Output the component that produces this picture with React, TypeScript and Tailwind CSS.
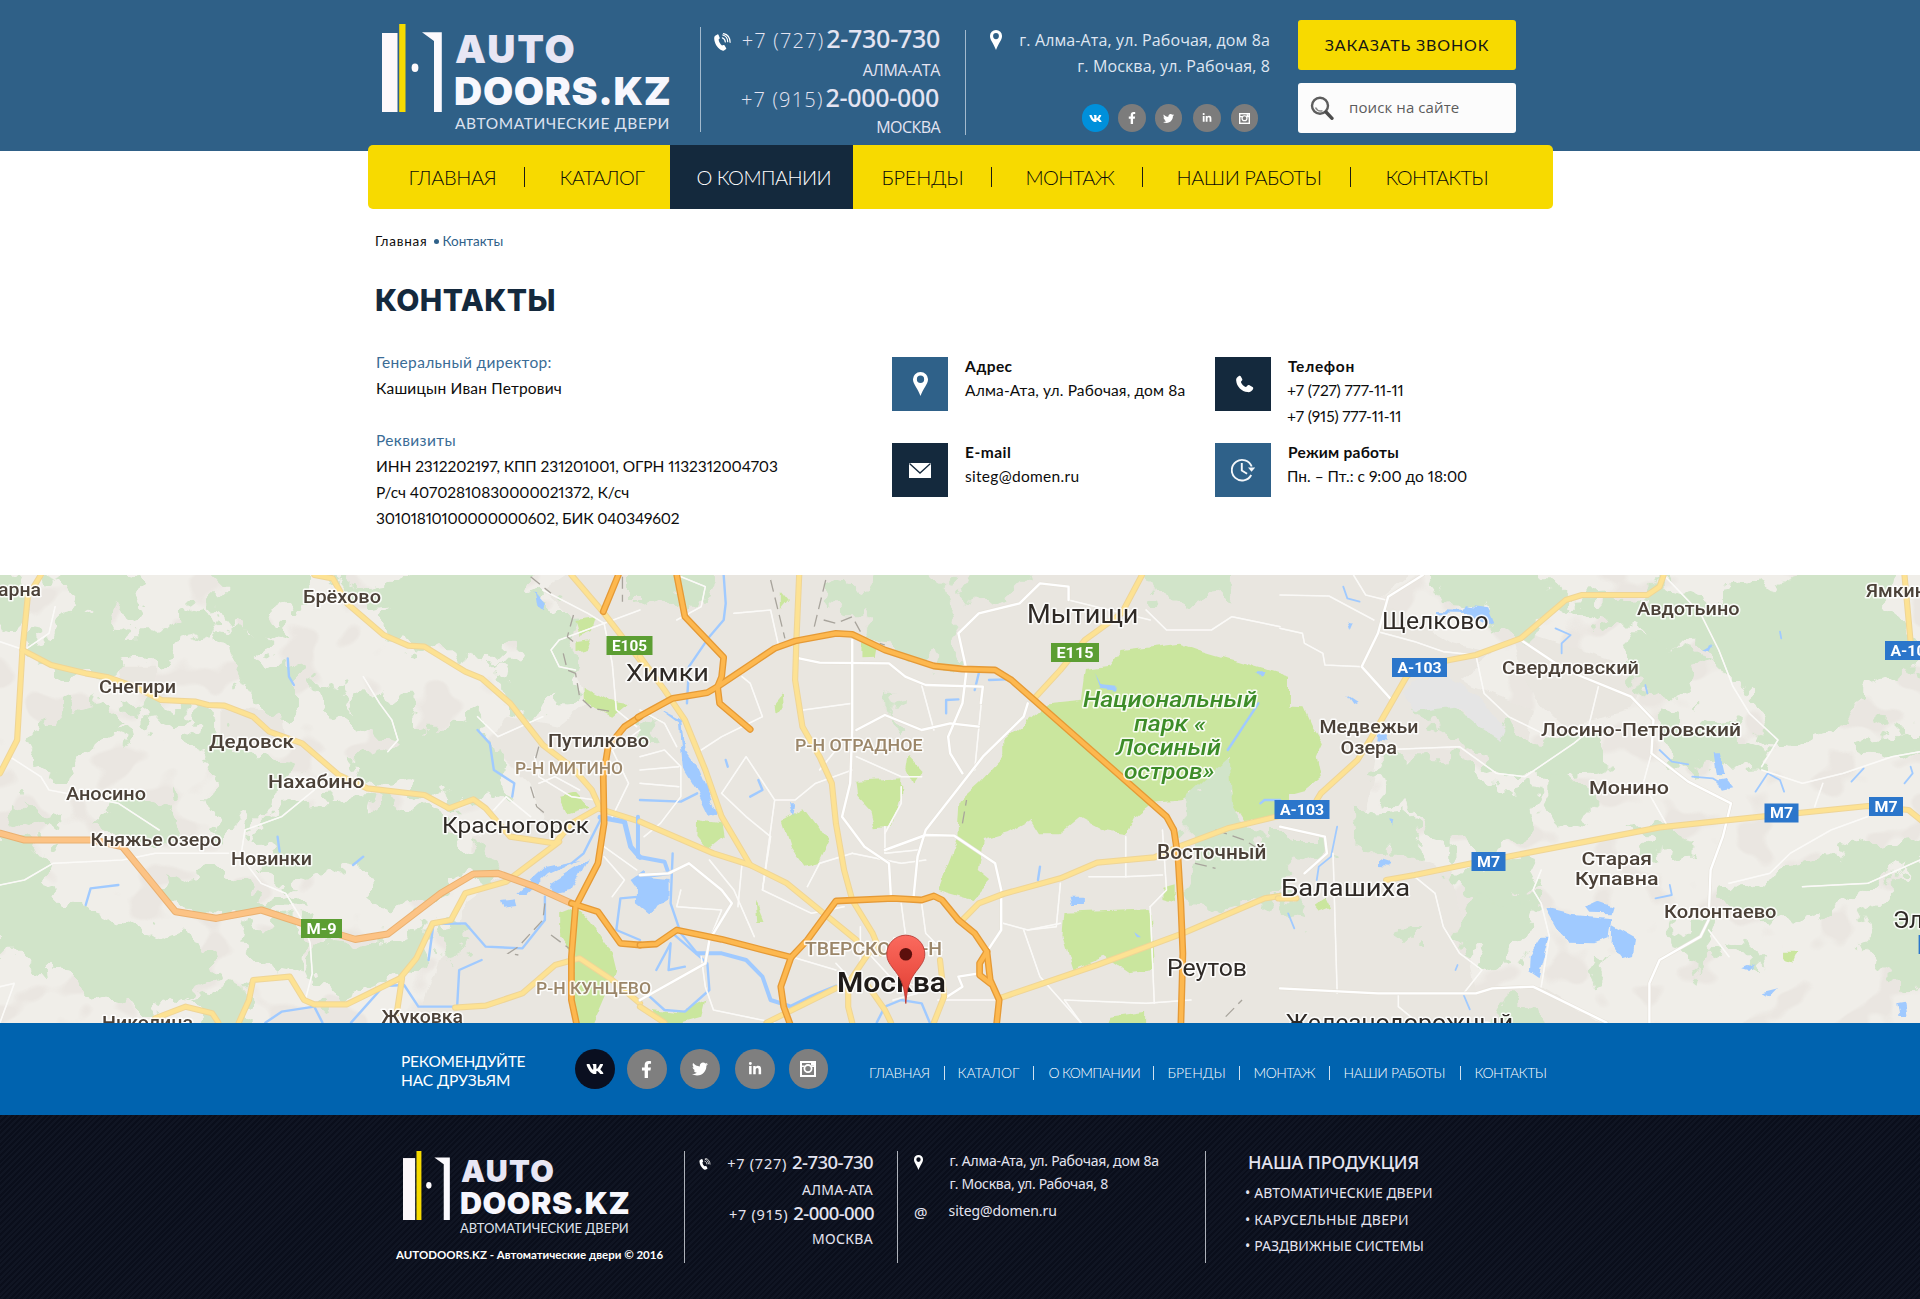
import type { ReactNode } from "react";
import { FaVk, FaFacebookF, FaTwitter, FaLinkedinIn } from "react-icons/fa";

type RoadKind = "yellow" | "orange" | "ring" | "white" | "minor";

const roadStyle: Record<RoadKind, { casing: string; fill: string; outer: number; inner: number }> = {
  yellow: { casing: "#efd596", fill: "#fde293", outer: 6.2, inner: 4.2 },
  orange: { casing: "#eab070", fill: "#fcc385", outer: 7.2, inner: 5.2 },
  ring: { casing: "#e59a36", fill: "#fdb84f", outer: 6.8, inner: 4.2 },
  white: { casing: "#e6e2da", fill: "#ffffff", outer: 3.6, inner: 2.4 },
  minor: { casing: "#f7f6f3", fill: "#fbfaf8", outer: 1.5, inner: 1.2 },
};

function Roads({ kind, lines }: { kind: RoadKind; lines: string[] }) {
  const s = roadStyle[kind];
  return (
    <g fill="none" strokeLinejoin="round" strokeLinecap="round">
      {lines.map((l) => (
        <polyline key={"c" + l} points={l} stroke={s.casing} strokeWidth={s.outer} vectorEffect="non-scaling-stroke" />
      ))}
      {lines.map((l) => (
        <polyline key={"f" + l} points={l} stroke={s.fill} strokeWidth={s.inner} vectorEffect="non-scaling-stroke" />
      ))}
    </g>
  );
}

function Areas({ fill, shapes }: { fill: string; shapes: string[] }) {
  return (
    <g fill={fill}>
      {shapes.map((s) => (
        <polygon key={s} points={s} />
      ))}
    </g>
  );
}

function Rivers({ lines, width = 2.4 }: { lines: string[]; width?: number }) {
  return (
    <g fill="none" stroke="#a0caff" strokeLinejoin="round" strokeLinecap="round">
      {lines.map((l) => (
        <polyline key={l} points={l} strokeWidth={width} vectorEffect="non-scaling-stroke" />
      ))}
    </g>
  );
}

const FOREST = "#d1e4c9";
const PARK = "#cae69e";
const URBAN = "#e9e6e0";
const WATER = "#a0caff";

const WEST = "translate(0 570) scale(0.408163 0.333333)";
const CENTER = "translate(640 570) scale(0.408163 0.333333)";
const EAST = "translate(1280 570) scale(0.408163 0.333333)";

type Label = { t: string; x: number; r: number; y: number; s: number; k?: "city" | "district" | "park" | "capital" };

const labels: Label[] = [
  { t: "арна", x: -2, r: 41, y: 596, s: 18 },
  { t: "Брёхово", x: 303, r: 381, y: 602.7, s: 18 },
  { t: "Снегири", x: 99, r: 176, y: 692.7, s: 18 },
  { t: "Дедовск", x: 209, r: 294, y: 748, s: 18 },
  { t: "Нахабино", x: 268, r: 364.5, y: 788, s: 18 },
  { t: "Аносино", x: 66, r: 146, y: 800, s: 18 },
  { t: "Княжье озеро", x: 90.6, r: 221.5, y: 846, s: 18 },
  { t: "Новинки", x: 231, r: 312, y: 865, s: 18 },
  { t: "Красногорск", x: 442, r: 589, y: 832.7, s: 22.5, k: "city" },
  { t: "Путилково", x: 548, r: 649, y: 746.7, s: 18 },
  { t: "Р-Н МИТИНО", x: 515, r: 623, y: 774, s: 16, k: "district" },
  { t: "Р-Н КУНЦЕВО", x: 536, r: 651, y: 994, s: 16, k: "district" },
  { t: "Николина", x: 102, r: 193, y: 1029, s: 18 },
  { t: "Жуковка", x: 381.5, r: 463, y: 1022.5, s: 18 },
  { t: "Химки", x: 626, r: 709, y: 681, s: 23.5, k: "city" },
  { t: "Мытищи", x: 1027, r: 1138.5, y: 622.5, s: 26, k: "city" },
  { t: "Р-Н ОТРАДНОЕ", x: 795, r: 922.5, y: 750.5, s: 17, k: "district" },
  { t: "Национальный", x: 1083, r: 1257, y: 706.5, s: 22.5, k: "park" },
  { t: "парк «", x: 1134, r: 1206, y: 730.5, s: 22.5, k: "park" },
  { t: "Лосиный", x: 1116, r: 1221, y: 755, s: 22.5, k: "park" },
  { t: "остров»", x: 1124, r: 1214.5, y: 779, s: 22.5, k: "park" },
  { t: "Восточный", x: 1157, r: 1266.5, y: 859, s: 19.5 },
  { t: "ТВЕРСКОЙ Р-Н", x: 805, r: 942, y: 955, s: 18, k: "district" },
  { t: "Москва", x: 837, r: 946, y: 992, s: 27.5, k: "capital" },
  { t: "Реутов", x: 1167, r: 1247, y: 976, s: 23, k: "city" },
  { t: "Щелково", x: 1382, r: 1488.5, y: 629, s: 23, k: "city" },
  { t: "Авдотьино", x: 1637, r: 1739.5, y: 615, s: 18 },
  { t: "Ямкино", x: 1866, r: 1937, y: 596.5, s: 18 },
  { t: "Свердловский", x: 1502, r: 1639, y: 673.7, s: 18 },
  { t: "Медвежьи", x: 1319.5, r: 1418.5, y: 733, s: 18 },
  { t: "Озера", x: 1340.5, r: 1397, y: 753.5, s: 18 },
  { t: "Лосино-Петровский", x: 1541, r: 1741, y: 736, s: 19 },
  { t: "Монино", x: 1589, r: 1669, y: 793.7, s: 18.5 },
  { t: "Старая", x: 1581.5, r: 1652, y: 864.7, s: 18.5 },
  { t: "Купавна", x: 1575, r: 1658.5, y: 885, s: 18.5 },
  { t: "Балашиха", x: 1281, r: 1410, y: 895.5, s: 24, k: "city" },
  { t: "Колонтаево", x: 1664, r: 1776.5, y: 917.7, s: 18 },
  { t: "Электросталь", x: 1893, r: 2053, y: 928, s: 23, k: "city" },
  { t: "Железнодорожный", x: 1285.5, r: 1513, y: 1031, s: 23.5, k: "city" },
];

const labelFill = { place: "#4b4138", city: "#2f2a26", district: "#9b8669", park: "#3d8c28", capital: "#1f1b19" };

type Shield = { t: string; x: number; y: number; w: number; c: string };
const shields: Shield[] = [
  { t: "E105", x: 606.5, y: 636, w: 46, c: "#5c9e33" },
  { t: "E115", x: 1051, y: 643, w: 48, c: "#5c9e33" },
  { t: "M-9", x: 301, y: 919, w: 41, c: "#5c9e33" },
  { t: "A-103", x: 1392, y: 658, w: 55, c: "#2b76cb" },
  { t: "A-103", x: 1274.5, y: 800, w: 55, c: "#2b76cb" },
  { t: "M7", x: 1471.5, y: 852, w: 34, c: "#2b76cb" },
  { t: "M7", x: 1764.5, y: 803.5, w: 34, c: "#2b76cb" },
  { t: "M7", x: 1869, y: 797, w: 34, c: "#2b76cb" },
  { t: "A-103", x: 1885, y: 641, w: 55, c: "#2b76cb" },
];

function RegionMap() {
  return (
    <svg viewBox="0 575 1920 448" className="block h-[448px] w-full" role="img" aria-label="Карта">
      <defs>
        <filter id="rough" x="0" y="0" width="100%" height="100%">
          <feTurbulence type="fractalNoise" baseFrequency="0.04" numOctaves="3" seed="4" result="n" />
          <feDisplacementMap in="SourceGraphic" in2="n" scale="48" xChannelSelector="R" yChannelSelector="G" />
        </filter>
        <filter id="rough-soft" x="0" y="0" width="100%" height="100%">
          <feTurbulence type="fractalNoise" baseFrequency="0.06" numOctaves="2" seed="9" result="n" />
          <feDisplacementMap in="SourceGraphic" in2="n" scale="9" xChannelSelector="R" yChannelSelector="G" />
        </filter>
        <filter id="patches" x="0" y="0" width="100%" height="100%" colorInterpolationFilters="sRGB">
          <feTurbulence type="fractalNoise" baseFrequency="0.022 0.026" numOctaves="2" seed="21" />
          <feColorMatrix values="0 0 0 0 0.918  0 0 0 0 0.902  0 0 0 0 0.882  14 0 0 0 -7.8" />
        </filter>
        <linearGradient id="pin" x1="0" y1="0" x2="0" y2="1">
          <stop offset="0" stopColor="#fb6a5e" />
          <stop offset="0.5" stopColor="#ee5347" />
          <stop offset="1" stopColor="#dd3a30" />
        </linearGradient>
      </defs>
      <rect x="0" y="575" width="1920" height="448" fill="#f0eee9" />
      <rect x="0" y="575" width="1920" height="448" filter="url(#patches)" />

      <g filter="url(#rough-soft)">
        <g transform={WEST}>
          <Areas
            fill={URBAN}
            shapes={[
              "540,410 690,420 700,510 620,540 540,520",
              "280,290 380,290 380,340 300,350",
              "1400,0 1580,0 1580,1370 1020,1370 1060,1230 1140,1000 1240,910 1160,860 1160,800 1330,740 1300,640 1200,520 1240,440 1370,470 1440,400 1390,250 1390,130 1330,60",
            ]}
          />
        </g>
        <g transform={CENTER}>
          <Areas fill={URBAN} shapes={["-20,0 1580,0 1580,1370 -20,1370"]} />
        </g>
        <g transform={EAST}>
          <Areas
            fill={URBAN}
            shapes={[
              "-20,0 330,0 240,90 420,220 520,250 440,330 620,420 600,560 440,530 240,560 200,800 420,900 480,1260 640,1250 800,1370 -20,1370",
              "560,170 760,250 900,300 860,420 700,470 620,380",
            ]}
          />
        </g>
      </g>

      <g filter="url(#rough)">
        <g transform={WEST}>
          <Areas
            fill={FOREST}
            shapes={[
              "110,-30 290,-30 345,60 330,120 290,140 310,190 390,190 510,100 550,190 470,220 420,230 400,285 330,300 290,295 240,330 180,320 110,275 65,230 80,180 120,190 170,150 200,120 180,80 140,60",
              "520,-30 740,-30 760,90 710,120 660,160 710,225 640,210 600,200 550,130 520,100",
              "780,-30 880,60 990,40 1030,-30 1290,-30 1320,60 1350,120 1420,130 1400,240 1410,320 1440,410 1370,420 1330,320 1290,310 1250,220 1200,280 1130,250 1060,250 1010,220 960,200 920,140 970,100 870,110",
              "550,180 620,200 670,270 730,300 730,390 710,430 640,410 590,300 560,250",
              "1220,280 1300,270 1350,330 1300,450 1240,400",
              "890,370 1000,380 1030,470 1090,470 1190,430 1220,500 1230,610 1250,660 1180,700 1100,700 1040,670 960,650 870,630 880,570 950,540 960,500 890,470 830,440",
              "480,410 540,470 560,540 710,560 730,620 670,650 660,710 610,770 540,800 490,700 520,620 480,520 490,460",
              "-20,780 50,790 120,850 110,930 130,970 190,1000 270,1040 330,1060 410,1090 510,1140 540,1230 450,1280 400,1320 300,1300 200,1260 170,1210 100,1200 60,1160 -20,1160",
              "160,410 250,390 310,450 220,520 190,600 130,620 70,570 100,500",
              "-20,20 50,20 70,110 20,170 -20,150",
              "230,760 300,680 350,710 430,680 450,770 390,810 300,810",
              "690,700 820,690 900,680 1010,720 1110,740 1100,800 1170,850 1200,910 1110,930 1060,990 960,1040 880,1000 900,910 820,890 760,930 700,950 640,900 680,850 620,780",
              "410,930 520,900 590,930 640,990 730,970 750,1035 640,1015 540,1040 430,1020",
              "600,1050 710,1060 760,1110 765,1190 710,1210 640,1190 590,1120",
              "790,1100 870,1110 960,1095 1040,1050 1040,1170 970,1220 880,1270 800,1300 760,1250 780,1160",
              "440,1290 560,1260 610,1240 620,1400 510,1400",
              "1060,1075 1150,1060 1170,1120 1110,1155 1065,1120",
              "310,400 360,370 430,420 480,440 450,490 380,470",
              "260,460 320,480 330,540 290,520",
              "20,740 60,690 140,740 100,780",
              "780,320 840,350 870,430 830,460 790,400",
            ]}
          />
        </g>
        <g transform={CENTER}>
          <Areas
            fill={FOREST}
            shapes={[
              "-20,-30 180,-30 170,80 110,120 60,90 -20,130",
              "460,50 560,10 690,-30 760,60 770,130 790,260 740,305 650,260 600,225 550,195 560,130 490,130 450,110",
              "780,-30 960,-30 940,60 890,115 800,70",
              "1220,-30 1470,-30 1470,75 1330,100 1240,80",
              "1340,660 1440,550 1460,690 1480,770 1590,830 1590,955 1400,1030 1340,1010 1345,800",
              "610,350 640,350 620,440 640,480 620,500",
              "-20,460 40,440 50,480 -20,520",
            ]}
          />
        </g>
        <g transform={EAST}>
          <Areas
            fill={FOREST}
            shapes={[
              "360,-30 600,-30 700,90 600,200 520,190 500,120 420,115 380,50",
              "700,100 900,90 930,30 1040,80 1130,70 1360,-30 1510,-30 1500,110 1590,200 1560,300 1480,340 1420,350 1390,460 1250,525 1190,505 1170,410 1100,330 1060,230 950,230 870,170 760,160",
              "840,190 900,190 1010,255 1080,275 1010,305 1020,390 910,380 850,285",
              "220,600 300,550 400,550 490,600 530,660 610,650 630,790 570,830 400,840 380,780 300,710 240,690",
              "180,740 300,725 350,780 335,860 240,860 190,800",
              "560,480 640,490 770,480 810,530 780,610 670,630 580,610 530,520",
              "640,620 700,610 780,700 770,790 700,780 640,710",
              "-10,795 100,795 115,855 60,880 -10,870",
              "460,970 560,945 620,1000 610,1110 560,1190 430,1110",
              "840,780 960,770 1010,845 900,860",
              "1080,960 1200,940 1230,890 1340,860 1400,820 1590,780 1590,870 1420,970 1300,1050 1180,1030 1090,1010",
              "1420,1110 1490,960 1590,840 1590,1200 1540,1275 1480,1200",
              "960,1075 1040,1050 1070,1150 1035,1220 980,1160",
              "1420,490 1500,460 1590,470 1570,570 1440,560",
              "325,410 460,420 545,480 565,550 610,600 570,620 475,550 350,450",
              "910,430 1000,470 1110,450 1210,540 1170,600 1030,610 950,560",
              "420,900 600,880 630,970 560,1000 440,965",
              "550,1300 620,1310 650,1400 530,1400",
              "-10,970 50,980 60,1050 10,1040",
              "300,1090 350,1080 350,1130 310,1130",
              "1100,1110 1150,1120 1200,1180 1150,1170",
              "750,1180 800,1190 780,1240",
            ]}
          />
        </g>
      </g>

      <g filter="url(#rough-soft)">
        <g transform={WEST}>
          <Areas
            fill={PARK}
            shapes={[
              "1370,1030 1410,1010 1450,1060 1500,1150 1510,1200 1450,1370 1410,1370 1400,1150 1370,1100",
              "1370,680 1410,670 1440,710 1390,730",
              "1410,150 1460,140 1450,180 1420,195",
              "1430,350 1490,390 1540,400 1500,440 1430,400",
              "1410,210 1450,205 1440,240 1410,250",
            ]}
          />
          <Areas
            fill={WATER}
            shapes={[
              "1350,940 1440,870 1400,960 1360,970",
              "1265,975 1340,890 1420,870 1340,915 1290,975",
              "1225,990 1260,985 1265,1005 1230,1010",
              "1310,60 1335,95 1330,115 1315,100",
              "1545,930 1580,900 1580,990",
            ]}
          />
        </g>
        <g transform={CENTER}>
          <Areas
            fill={PARK}
            shapes={[
              "1150,290 1180,240 1320,218 1370,240 1590,320 1590,740 1480,750 1450,690 1445,560 1400,610 1330,690 1250,700 1210,740 1190,790 1140,780 1080,740 1030,790 980,790 960,750 900,790 840,810 830,900 860,930 815,990 730,960 780,800 785,690 830,640 890,560 890,510 960,440 1000,400 1080,390 1090,300",
              "530,635 640,628 640,680 620,770 575,775 565,720 535,680",
              "350,750 400,715 440,780 465,800 435,880 405,890 370,830",
              "140,750 200,760 205,800 165,840 138,800",
              "1040,1025 1250,1015 1260,1200 1200,1210 1140,1160 1060,1200 1035,1100",
              "540,225 580,225 575,260 540,262",
              "330,400 350,370 352,410 332,425",
              "285,990 305,1050 290,1050",
              "1280,950 1310,940 1310,1000 1280,990",
              "660,560 690,600 670,640 655,600",
              "30,1320 90,1330 160,1290 150,1340 60,1370",
              "1150,1340 1240,1325 1240,1370 1140,1370",
              "345,60 365,90 345,120",
            ]}
          />
          <Areas
            fill={WATER}
            shapes={[
              "45,415 100,450 110,540 145,600 190,730 170,738 135,650 105,590 95,460",
              "-10,920 70,930 70,990 20,1030 -10,1000",
              "1050,980 1090,980 1090,1005 1055,1005",
              "1115,310 1130,345 1165,350 1165,365 1130,360",
              "1510,310 1530,310 1525,330",
              "365,700 380,700 375,740",
              "1210,1085 1230,1105 1220,1105",
            ]}
          />
        </g>
        <g transform={EAST}>
          <Areas fill={PARK} shapes={["-30,410 60,415 80,470 105,520 90,560 100,620 60,660 -30,690", "85,1010 115,985 125,1010 95,1025", "1235,1145 1270,1145 1260,1175 1235,1165"]} />
          <Areas fill="#e5e5e5" shapes={["300,370 340,320 400,310 490,380 550,480 540,510 490,470 430,410 330,425"]} />
          <Areas
            fill={WATER}
            shapes={[
              "650,1015 720,1035 812,1045 805,1105 770,1120 710,1118 680,1080",
              "812,1065 870,1105 865,1155 838,1165 810,1120",
              "750,1012 780,995 815,1010 810,1030 760,1028",
              "640,1100 662,1100 636,1222 610,1200 612,1155",
              "1060,550 1080,550 1092,612 1068,612",
              "1068,635 1092,630 1108,655 1080,662",
              "378,120 450,122 458,106 510,115 525,160 510,165 460,132 380,130",
              "1510,1300 1530,1295 1535,1338 1515,1338",
              "1180,1270 1220,1258 1200,1283",
              "165,155 180,158 172,180",
              "1035,245 1060,228 1050,250",
              "245,870 270,880 265,890 245,888",
              "165,375 190,395 180,402",
              "238,490 260,490 258,512 236,508",
              "265,748 275,750 272,768",
              "1135,1195 1165,1180 1150,1200",
            ]}
          />
        </g>
      </g>

      <g transform={WEST}>
        <Rivers
          lines={[
            "650,1358 690,1325 770,1310 790,1358",
            "860,1358 940,1248 990,1245 1025,1310 1120,1310 1125,1200 1180,1170",
            "1050,1170 1062,1062 1140,1060 1190,1130 1280,1135 1335,1050 1335,980",
            "210,1005 222,955 290,945",
            "1475,740 1430,850 1400,880",
            "1170,480 1200,520 1210,600 1260,640 1255,680",
            "1568,980 1520,985 1510,1080 1568,1110",
            "705,265 708,320 720,345",
            "680,800 685,845",
            "865,885 890,860",
          ]}
        />
        <Rivers width={5} lines={["1470,742 1530,755 1545,830 1568,862"]} />
        <Roads
          kind="minor"
          lines={[
            "0,215 60,240",
            "0,945 60,930 130,880 300,870 380,850 560,850",
            "30,565 100,620 120,660 290,700 390,780",
            "60,240 120,190 135,110",
            "770,660 690,740 600,780 590,860 640,940 700,970 740,1050 760,1120 765,1210 750,1280",
            "0,1250 35,1240 0,1358",
            "890,320 930,400 960,450 975,510 950,545",
            "1568,120 1480,160 1370,210 1350,240 1370,290 1410,300",
            "1480,160 1500,280 1510,420 1560,470",
            "1330,60 1440,130 1480,160",
            "1170,440 1220,500 1330,440",
            "1310,560 1320,620 1400,680 1460,690",
            "1480,830 1560,900",
            "1210,720 1240,680 1300,740",
            "1568,480 1500,540 1540,640 1500,740",
            "1480,860 1530,930 1500,980",
            "1320,640 1360,620 1420,660",
          ]}
        />
        <g fill="none" stroke="#a8a49c" strokeDasharray="12 6" strokeWidth="1.3">
          {["1300,20 1350,70", "1405,135 1390,200 1410,220", "1380,250 1390,300 1410,310 1420,380 1450,415 1500,425", "1320,530 1305,600", "1300,650 1315,710 1335,730", "1335,1000 1330,1050 1270,1130 1245,1150 1270,1155", "1350,1095 1400,1140", "1525,20 1525,95"].map((l) => (
            <polyline key={l} points={l} vectorEffect="non-scaling-stroke" />
          ))}
        </g>
        <Roads
          kind="yellow"
          lines={[
            "100,15 68,80 55,240 42,510 0,610",
            "55,240 125,285 210,310 265,322 330,350 395,390 480,395 510,405 550,407 620,440 660,485 740,520 830,615 900,655 1040,675 1100,715 1160,688 1190,715 1250,800 1360,820 1400,760 1465,715 1568,755",
            "770,15 815,25 850,100 940,195 1000,227 1040,230 1140,305 1180,325 1250,400 1330,525 1400,590 1450,660 1470,715",
            "1370,815 1240,935 1140,970 1105,1050 1060,1060 1020,1165 980,1225 850,1303 770,1303 745,1290 710,1220 620,1230 610,1290 585,1358",
            "985,1225 972,1330",
            "1115,1313 1190,1307 1280,1270 1360,1185 1420,1165 1500,1230 1568,1300",
            "380,1345 455,1310 520,1330 535,1358",
            "1400,15 1480,130 1568,270",
          ]}
        />
        <Roads
          kind="orange"
          lines={["0,790 60,810 230,810 300,830 430,1025 530,1045 640,1020 740,1060 870,1108 950,1092 1080,970 1160,912 1220,910 1310,950 1400,1000"]}
        />
        <Roads
          kind="ring"
          lines={[
            "1400,1000 1465,1025 1520,1120 1568,1125",
            "1568,440 1530,470 1490,530 1478,620 1480,760 1465,880 1410,1010 1400,1160 1400,1290 1412,1358",
            "1515,15 1478,125",
          ]}
        />
      </g>

      <g transform={CENTER}>
        <Rivers
          lines={[
            "205,15 210,100 205,150 170,200 120,290 115,400",
            "80,850 75,1000 100,1090 140,1150",
            "80,1090 165,1180 170,1260 110,1325 60,1320 15,1270",
            "1568,690 1530,690 1520,700",
            "750,430 750,390 780,388",
            "830,310 820,360",
            "855,330 900,328",
            "980,890 975,930",
            "1515,400 1440,540",
            "580,1358 600,1310 640,1290 690,1300 710,1358",
            "0,690 100,695 140,670",
            "40,1200 75,1120 70,1200 110,1190",
            "290,630 300,660 270,680",
            "210,570 215,590",
          ]}
        />
        <Rivers width={4} lines={["-5,740 -5,860 60,875 70,910 0,920", "140,1150 200,1150 260,1170 300,1220 320,1290 370,1310 420,1280 480,1250"]} />
        <Roads
          kind="minor"
          lines={[
            "0,560 60,540 100,590 100,680 50,760 10,800",
            "0,640 95,650",
            "0,600 95,590",
            "0,420 60,460 90,530",
            "230,130 320,120 340,230",
            "250,320 270,340 300,440 200,500 150,540",
            "200,670 260,560 330,690 380,690 430,640 520,600",
            "200,670 260,740 320,800 300,960",
            "330,690 300,960 420,1030 500,1010",
            "100,960 90,1010 200,1020 170,1110",
            "170,870 230,960 280,1100",
            "400,420 520,400",
            "150,1160 160,1250 180,1320 330,1358",
            "370,1160 480,1200",
            "600,770 600,850 680,840",
            "690,620 640,620 530,560",
            "840,350 820,600",
            "520,850 440,880 410,950",
            "1190,800 1190,920 1100,920",
            "1190,920 1280,915",
            "1280,780 1290,960 1250,1010",
            "1030,940 1020,1070 950,1080",
            "1040,1290 1240,1300 1350,1290",
            "940,1080 980,1220 1080,1358",
            "890,1060 950,1080 1030,1060",
            "730,1290 870,1290",
            "1250,1010 1260,1300",
            "1080,1358 1040,1290",
            "1240,120 1290,180 1400,180 1450,140 1568,170",
            "1050,90 1250,150",
            "90,15 160,50 150,110 90,150",
            "640,650 640,700 600,790",
            "480,540 440,600",
            "690,345 720,480",
            "700,870 640,880 520,850",
            "250,880 240,1010",
            "540,1070 540,1180",
            "560,1150 620,1230 720,1260",
            "690,1000 700,1090 740,1140",
            "640,1000 650,1090",
            "480,1180 540,1260",
            "620,1290 680,1270",
          ]}
        />
        <Roads
          kind="white"
          lines={[
            "520,210 520,480 515,640 495,740 550,830 610,880 615,985",
            "390,265 440,278 610,280 650,320 700,345 840,350 835,400",
            "950,400 940,440 840,560 700,780 680,860 670,985",
            "790,610 760,550 755,500 790,400 800,300 780,190 830,130 930,100 980,40 1050,50 1050,90",
            "600,840 700,795 770,797 870,880 885,960 885,1080 850,1145",
            "0,915 70,910 120,880 200,960 225,1000 170,1110 160,1180 0,1290",
            "530,480 600,435 690,480 760,460 830,470",
            "740,1290 790,1250 780,1220 830,1210",
          ]}
        />
        <g fill="none" stroke="#a8a49c" strokeDasharray="12 6" strokeWidth="1.3">
          {["320,30 355,205", "455,30 425,180", "450,150 480,160 520,140 540,185", "545,205 600,225", "790,760 800,690", "1410,780 1480,810 1520,840", "1360,880 1410,895", "1435,1340 1475,1290"].map((l) => (
            <polyline key={l} points={l} vectorEffect="non-scaling-stroke" />
          ))}
        </g>
        <Roads
          kind="yellow"
          lines={[
            "390,15 383,215 380,330 398,470 440,560 470,640 480,760 500,900 520,990 570,1090 590,1150",
            "0,755 180,850 270,885 360,940 450,1030 530,1110",
            "0,260 60,360 110,450 160,600 200,740 270,885",
            "1230,15 1180,130 1090,210 1030,300 970,380",
            "790,1050 830,1000 890,972 1030,925 1120,878 1260,862 1320,830 1440,775 1575,735",
            "880,1285 1120,1185 1330,1090 1530,985 1568,978",
            "560,1150 510,1240 510,1310 520,1358",
            "560,1250 600,1320 615,1358",
            "735,1170 745,1280 720,1358",
            "310,1358 480,1255",
            "0,1310 60,1358",
          ]}
        />
        <Roads
          kind="ring"
          lines={[
            "90,15 110,140 205,262 200,320 190,350 195,400 270,478",
            "-5,442 80,385 165,368 190,350 330,235 380,213 480,190 520,193 600,240 720,288 790,297 870,300 910,330 1290,740 1308,780 1318,860 1325,1000 1330,1150 1325,1370",
            "0,1125 40,1122 90,1080 200,1108 370,1162 410,1110 480,993 620,985 690,990 720,978 740,990 780,1050 820,1090 850,1145 858,1230 880,1290 873,1370",
            "370,1162 345,1250 352,1310 370,1370",
            "850,1145 832,1180 832,1215 858,1240",
          ]}
        />
      </g>

      <g transform={EAST}>
        <Rivers
          width={1.8}
          lines={[
            "675,175 712,195 690,220 690,250",
            "155,50 165,85 195,95",
            "1010,620 1060,625 1100,655",
            "1165,665 1195,610 1225,630 1235,665",
            "1400,635 1430,595",
            "1530,640 1550,610 1545,590",
            "140,770 125,860 95,890 90,930",
            "930,540 960,575 1000,583",
            "920,985 960,975 955,945",
            "450,1275 465,1318",
            "20,1030 35,1075",
            "895,345 900,370",
            "430,1200 435,1185",
            "1225,185 1228,205",
          ]}
        />
        <Roads
          kind="minor"
          lines={[
            "0,75 120,78 230,150",
            "0,175 55,190 60,220 105,250 110,285 200,290",
            "180,15 210,75 260,90",
            "240,185 330,215 400,245 480,255",
            "480,255 500,370 560,440 660,500",
            "240,540 440,530 530,610 600,620 720,520 770,470",
            "780,350 750,500",
            "940,15 1030,130 1075,240 1110,350 1150,430 1220,510 1180,590",
            "1180,600 1280,640 1380,610 1500,560 1568,545",
            "1440,740 1350,780 1250,850 1200,910 1100,940",
            "640,900 620,960 640,1000 660,1100 640,1250",
            "330,920 380,970 400,1070 440,1150 495,1200 450,1270",
            "130,850 140,1270",
            "1280,950 1440,940 1568,870",
            "1050,1080 1100,1160",
            "910,550 890,640 950,770",
            "1330,640 1310,710",
            "290,1275 290,1310 330,1350",
          ]}
        />
        <Roads
          kind="white"
          lines={[
            "350,15 265,80 240,190 200,290 270,385",
            "590,210 700,300 860,380 915,450 910,550 1000,635 1105,700 1085,800 1055,900 1050,1050 1030,1100 930,1170 905,1240 905,1358",
            "0,1255 240,1270 480,1270 520,1255 620,1250 800,1358",
            "0,770 110,800 115,850 60,910",
          ]}
        />
        <Roads
          kind="yellow"
          lines={[
            "90,690 100,670 190,570 230,490 310,320 340,290 415,270 480,255 590,205 700,90 740,75 900,75 930,50 940,15",
            "260,930 330,915 470,880 550,862 930,772 1180,740 1440,708 1540,720 1575,755",
            "1530,15 1545,215",
            "-5,985 40,985",
          ]}
        />
      </g>

      <g fontFamily="Roboto, sans-serif">
        {labels.map((l) => {
          const kind = l.k ?? "place";
          return (
            <text
              key={l.t + l.x}
              x={l.x}
              y={l.y}
              fontSize={l.s}
              textLength={l.r - l.x}
              lengthAdjust="spacingAndGlyphs"
              fill={labelFill[kind]}
              stroke="#ffffff"
              strokeOpacity="0.85"
              strokeWidth="3"
              strokeLinejoin="round"
              paintOrder="stroke"
              fontStyle={kind === "park" ? "italic" : "normal"}
              fontWeight={kind === "capital" ? 600 : kind === "city" ? 450 : 500}
            >
              {l.t}
            </text>
          );
        })}
        {shields.map((s) => (
          <g key={s.t + s.x}>
            <rect x={s.x} y={s.y} width={s.w} height="19" fill={s.c} />
            <text x={s.x + s.w / 2} y={s.y + 14.6} fontSize="14.5" fontWeight="700" fill="#fff" textAnchor="middle" textLength={s.w - 11} lengthAdjust="spacingAndGlyphs">
              {s.t}
            </text>
          </g>
        ))}
        <rect x="1918.6" y="935" width="2" height="19" fill="#2b76cb" />
      </g>

      <path d="M905.8 1003.5C904.6 988 902 980 895.500 971.500C890 964.500 886.800 960.500 886.800 954A19 18.800 0 0 1 924.800 954C924.800 960.500 921.600 964.500 916.100 971.500C909.600 980 907 988 905.800 1003.500Z" fill="url(#pin)" stroke="#b93a33" strokeWidth="0.9" />
      <circle cx="905.8" cy="954.3" r="6.3" fill="#5c0f0c" />
    </svg>
  );
}

function PinIcon({ className }: { className: string }) {
  return (
    <svg viewBox="0 0 12 20" preserveAspectRatio="none" className={className} fill="currentColor">
      <path fillRule="evenodd" d="M6 0a6 6 0 0 1 6 6.200C12 10 8 14 6 20 4 14 0 10 0 6.200A6 6 0 0 1 6 0Zm0 3a2.900 3.100 0 1 0 0 6.200 2.900 3.100 0 0 0 0-6.200Z" />
    </svg>
  );
}

function RingingPhoneIcon({ className }: { className: string }) {
  return (
    <svg viewBox="0 0 17 18" className={className} fill="none">
      <path fill="currentColor" d="M1.600 2.600 3.400 1.500c.5-.3 1-.1 1.200.4l1.100 2.800c.2.5 0 .9-.3 1.100L4.600 6.600c.3 2.300 1.500 4.400 3.400 5.900l1.500-.5c.4-.1.8 0 1.100.4l1.500 2.500c.3.500.1 1-.3 1.300l-1.800 1.200c-1 .5-2.200.2-3.500-.6C3.300 14.700.5 10.300.2 5.800.1 4.300.5 3.200 1.600 2.600Z" />
      <path stroke="currentColor" strokeWidth="1.200" strokeLinecap="round" d="M8.300 4.800c1.700.5 2.900 1.900 3 4.100M8.700 2c3 .7 4.900 3.300 5 6.700M9.500.6c3.800.8 6.500 4.100 6.600 8.700" />
    </svg>
  );
}

function HandsetIcon() {
  return (
    <svg viewBox="0 0 18 18" className="h-[19px] w-[18px] translate-x-[2px]" fill="#fff">
      <path d="M1.600 1.600 2.900.5C3.500 0 4.300 0 4.700.7l1.500 2.700c.3.6.2 1.200-.2 1.600l-.9 1c-.2.3-.2.600 0 1 .9 2 2.500 3.600 4.600 4.400.3.100.7 0 .9-.3l.9-1.200c.4-.5 1-.7 1.600-.3l3.400 2c.7.4.9 1.100.6 1.800-1 2.200-3.100 3.500-5.600 3.200C5.600 16 .8 11.200.2 5.200 0 3.700.5 2.500 1.600 1.600Z" />
    </svg>
  );
}

function EnvelopeIcon() {
  return (
    <svg viewBox="0 0 22 15" className="h-[15px] w-[22px]">
      <rect width="22" height="15" fill="#fff" />
      <path d="M0.500 0.500 11 10 21.500 0.500" fill="none" stroke="#15293d" strokeWidth="1.300" />
    </svg>
  );
}

function ClockIcon() {
  return (
    <svg viewBox="0 0 24 24" className="h-6 w-6" fill="none" stroke="#f4f7fa" strokeWidth="1.900">
      <path d="M20.700 8.500A10.300 10.300 0 1 0 20.200 17" />
      <path d="M10.800 5v7.500l5.300 3.200" />
      <path d="M17 9.500h7.200l-3.700 4.300Z" fill="#f4f7fa" stroke="none" />
    </svg>
  );
}

function CameraIcon({ className }: { className: string }) {
  return (
    <svg viewBox="0 0 16 16" className={className} fill="none" stroke="#fff">
      <rect x="1" y="1" width="14" height="14" strokeWidth="2" />
      <path d="M1 5.200h3.600M11.400 5.200H15" strokeWidth="1.600" />
      <rect x="11" y="1.800" width="3" height="2.800" fill="#fff" stroke="none" />
      <circle cx="8" cy="7.600" r="3.600" strokeWidth="1.800" />
    </svg>
  );
}

function MagnifierIcon() {
  return (
    <svg viewBox="0 0 24 24" className="h-6 w-6" fill="none">
      <circle cx="10" cy="9.800" r="8" stroke="#5d5d5d" strokeWidth="2.400" />
      <path d="M5.500 11.500c1.500 3 4 4 7 3.200" stroke="#8a8a8a" strokeWidth="1.600" />
      <path d="m16 16 6 6.300" stroke="#4c4c4c" strokeWidth="3.400" strokeLinecap="round" />
    </svg>
  );
}

function LogoMark({ className }: { className: string }) {
  return (
    <svg viewBox="0 0 60 88" preserveAspectRatio="none" className={className}>
      <rect x="0" y="9" width="15.500" height="79" fill="#fdf8fa" />
      <rect x="17.200" y="0" width="6.300" height="88" fill="#f7db00" />
      <ellipse cx="33" cy="43.800" rx="3.400" ry="4.200" fill="#fdfafc" />
      <path d="M40 8.300H59.800V88H52V17Z" fill="#fbf9fd" />
    </svg>
  );
}

function T({ className = "", children }: { className?: string; children: ReactNode }) {
  return <span className={"inline-block whitespace-nowrap " + className}>{children}</span>;
}

function Social({ big }: { big?: boolean }) {
  const cell = big ? "flex h-10 w-[39.5px] items-center justify-center rounded-full text-white" : "flex h-7 w-[27.5px] items-center justify-center rounded-full text-white";
  return (
    <>
      <a className={cell + (big ? " bg-[#0a0f20]" : " bg-[#0090db]")}><FaVk className={big ? "h-[18px] w-[18px]" : "h-[13px] w-[13px]"} /></a>
      <a className={cell + (big ? " ml-[12.5px] bg-[#7f7f7f]" : " ml-[9px] bg-[#7c7c7c]")}><FaFacebookF className={big ? "h-[17px] w-[17px]" : "h-[12px] w-[12px]"} /></a>
      <a className={cell + (big ? " ml-[13.5px] bg-[#7f7f7f]" : " ml-[9px] bg-[#7c7c7c]")}><FaTwitter className={big ? "h-[16px] w-[16px]" : "h-[11px] w-[11px]"} /></a>
      <a className={cell + (big ? " ml-[15.5px] bg-[#7f7f7f]" : " ml-[11px] bg-[#7c7c7c]")}><FaLinkedinIn className={big ? "h-[14px] w-[14px]" : "h-[10px] w-[10px]"} /></a>
      <a className={cell + (big ? " ml-[14px] bg-[#7f7f7f]" : " ml-[10px] bg-[#7c7c7c]")}><CameraIcon className={big ? "h-[16px] w-[16px]" : "h-[11px] w-[11px]"} /></a>
    </>
  );
}

function Header() {
  return (
    <header className="h-[151px] bg-[#2f6087]">
      <div className="mx-auto flex w-[1184px]">
        <div className="flex w-[332px] pl-[14px]">
          <LogoMark className="mt-6 h-[88px] w-[60px]" />
          <div className="ml-3 flex flex-col items-start">
            <T className="mt-[28px] ml-px font-['Inter'] text-[39px] leading-[42px] font-black tracking-[1.9px] text-[#e8e6f4]">AUTO</T>
            <T className="font-['Inter'] text-[39px] leading-[42px] font-black tracking-[0.7px] text-[#f7f7fd]">DOORS.KZ</T>
            <T className="-mt-px ml-px font-['Lato'] text-[15.5px] leading-6 tracking-[0.6px] text-[#dce2f0]">АВТОМАТИЧЕСКИЕ ДВЕРИ</T>
          </div>
        </div>
        <div className="mt-[27px] flex h-[105px] w-[265px] border-l border-[#a3bacd] text-[#e4e4f2]">
          <RingingPhoneIcon className="mt-[6px] ml-[13px] h-[18px] w-[17px] text-white" />
          <div className="-mt-1 ml-auto flex flex-col items-end pr-[25px] font-['Noto_Sans']">
            <p className="flex items-baseline leading-[30px]">
              <T className="mr-[2px] font-['Open_Sans'] text-[20px] font-light tracking-[1.17px]">+7 (727)</T>
              <T className="text-[25px] font-medium tracking-[-0.27px]">2-730-730</T>
            </p>
            <T className="font-['Open_Sans'] text-[16px] leading-7 tracking-[-0.35px]">АЛМА-АТА</T>
            <p className="-mt-[2px] mr-px flex items-baseline leading-[30px]">
              <T className="mr-[2px] font-['Open_Sans'] text-[20px] font-light tracking-[1.18px]">+7 (915)</T>
              <T className="text-[25px] font-medium tracking-[-0.3px]">2-000-000</T>
            </p>
            <T className="font-['Open_Sans'] text-[16px] leading-6 tracking-[-0.55px]">МОСКВА</T>
          </div>
        </div>
        <div className="mt-[30px] flex h-[105px] w-[305px] border-l border-[#a3bacd] text-[#dfe6f2]">
          <PinIcon className="ml-[24px] h-[20px] w-3 text-white" />
          <div className="ml-auto flex flex-col items-end font-['Open_Sans'] text-[16px] leading-[26px] tracking-[0.12px]">
            <T className="-mt-[3px]">г. Алма-Ата, ул. Рабочая, дом 8а</T>
            <T>г. Москва, ул. Рабочая, 8</T>
            <div className="mt-[25px] mr-[12px] flex"><Social /></div>
          </div>
        </div>
        <div className="mt-5 ml-[28px] flex w-[218px] flex-col gap-[13px]">
          <button className="flex h-[50px] items-center justify-center rounded-[3px] bg-[#f7da00] font-['Lato'] text-[16px] text-[#151515]">
            <T className="tracking-[0.85px]">ЗАКАЗАТЬ ЗВОНОК</T>
          </button>
          <div className="flex h-[50px] items-center rounded-[3px] bg-[#fcfcfc] pl-[12px]">
            <MagnifierIcon />
            <T className="mb-px ml-[15px] font-['Open_Sans'] text-[15px] tracking-[0.1px] text-[#5c5c5c]">поиск на сайте</T>
          </div>
        </div>
      </div>
    </header>
  );
}

function MainNav() {
  const it = "flex h-16 items-center";
  const bar = "h-5 w-px bg-[#1c1c14]";
  return (
    <nav className="relative mx-auto -mt-[6px] flex h-16 w-[1185px] items-center overflow-hidden rounded-[5px] bg-[#f7da00] font-['Lato'] text-[20px] font-light text-[#0a0a0a]">
      <a className={it + " w-[156px] pl-[41px]"}><T className="tracking-[-0.34px]">ГЛАВНАЯ</T></a>
      <i className={bar} />
      <a className={it + " w-[145px] pl-[35px]"}><T className="tracking-[-0.5px]">КАТАЛОГ</T></a>
      <a className={it + " w-[183px] bg-[#14293d] pl-[27px] text-white"}><T className="tracking-[-0.56px]">О КОМПАНИИ</T></a>
      <a className={it + " w-[138px] pl-[29px]"}><T className="tracking-[-0.19px]">БРЕНДЫ</T></a>
      <i className={bar} />
      <a className={it + " w-[150px] pl-[34px]"}><T className="tracking-[-0.62px]">МОНТАЖ</T></a>
      <i className={bar} />
      <a className={it + " w-[207px] pl-[34px]"}><T className="tracking-[-0.45px]">НАШИ РАБОТЫ</T></a>
      <i className={bar} />
      <a className={it + " pl-[35px]"}><T className="tracking-[-0.68px]">КОНТАКТЫ</T></a>
    </nav>
  );
}

function ContactCard({ dark, icon, title, children }: { dark?: boolean; icon: ReactNode; title: ReactNode; children: ReactNode }) {
  return (
    <div className="flex">
      <div className={"flex h-[54px] w-14 items-center justify-center " + (dark ? "bg-[#14293d]" : "bg-[#2f6189]")}>{icon}</div>
      <div className="ml-[17px] flex flex-col items-start leading-[26px]">
        <h3 className="-mt-px h-[20.5px] font-bold leading-5">{title}</h3>
        {children}
      </div>
    </div>
  );
}

function Content() {
  return (
    <main className="mx-auto h-[366px] w-[1184px] pl-2 font-['Lato'] text-[15.5px] text-[#0c0c0c] proportional-nums">
      <p className="-ml-px flex items-center pt-[22px] text-[13.5px] leading-5">
        <T className="tracking-[0.8px]">Главная</T>
        <i className="mr-1 ml-[6px] h-[5px] w-[5px] rounded-full bg-[#2f6189]" />
        <T className="text-[#2f6189]">Контакты</T>
      </p>
      <h1 className="mt-[29px] -ml-px leading-10">
        <T className="font-['Inter'] text-[30px] font-extrabold tracking-[0.4px] text-[#14293d]">КОНТАКТЫ</T>
      </h1>
      <div className="mt-[24px] flex">
        <div className="flex w-[516px] flex-col items-start leading-[26px]">
          <T className="tracking-[0.34px] text-[#3a6c96]">Генеральный директор:</T>
          <T className="tracking-[0.2px]">Кашицын Иван Петрович</T>
          <T className="mt-[26px] tracking-[0.38px] text-[#3a6c96]">Реквизиты</T>
          <T className="tracking-[-0.08px]">ИНН 2312202197, КПП 231201001, ОГРН 1132312004703</T>
          <T className="tracking-[-0.08px]">Р/сч 40702810830000021372, К/сч</T>
          <T className="tracking-[-0.18px]">30101810100000000602, БИК 040349602</T>
        </div>
        <div className="mt-2 grid grid-cols-[323px_auto] grid-rows-[86px_54px]">
          <ContactCard icon={<PinIcon className="h-6 w-[15px] text-white" />} title={<T className="tracking-[0.45px]">Адрес</T>}>
            <T className="tracking-[0.15px]">Алма-Ата, ул. Рабочая, дом 8а</T>
          </ContactCard>
          <ContactCard dark icon={<HandsetIcon />} title={<T className="tracking-[0.65px]">Телефон</T>}>
            <T className="-ml-px tracking-[-0.13px]">+7 (727) 777-11-11</T>
            <T className="-ml-px tracking-[-0.13px]">+7 (915) 777-11-11</T>
          </ContactCard>
          <ContactCard dark icon={<EnvelopeIcon />} title={<T className="tracking-[0.5px]">E-mail</T>}>
            <T className="tracking-[0.3px]">siteg@domen.ru</T>
          </ContactCard>
          <ContactCard icon={<ClockIcon />} title={<T className="tracking-[0.25px]">Режим работы</T>}>
            <T className="-ml-px">Пн. – Пт.: с 9:00 до 18:00</T>
          </ContactCard>
        </div>
      </div>
    </main>
  );
}

function FriendsBar() {
  const bar = "h-[14px] w-px bg-[#cfe0f0]";
  return (
    <section className="h-[92px] bg-[#0063af] text-white">
      <div className="mx-auto flex w-[1184px] font-['Lato']">
        <div className="mt-[29px] ml-[33px] flex w-[174px] flex-col items-start text-[15.5px] leading-[19px]">
          <T className="tracking-[-0.25px]">РЕКОМЕНДУЙТЕ</T>
          <T className="tracking-[-0.1px]">НАС ДРУЗЬЯМ</T>
        </div>
        <div className="mt-[26px] flex w-[294px]"><Social big /></div>
        <nav className="mt-[40px] flex h-5 items-center text-[14px] font-light leading-5">
          <a className="w-[74.500px]"><T className="tracking-[-0.35px]">ГЛАВНАЯ</T></a><i className={bar} />
          <a className="w-[88px] pl-[13px]"><T>КАТАЛОГ</T></a><i className={bar} />
          <a className="w-[119px] pl-[15px]"><T className="tracking-[-0.65px]">О КОМПАНИИ</T></a><i className={bar} />
          <a className="w-[85px] pl-[14px]"><T>БРЕНДЫ</T></a><i className={bar} />
          <a className="w-[89px] pl-[14px]"><T className="tracking-[-0.55px]">МОНТАЖ</T></a><i className={bar} />
          <a className="w-[130px] pl-[14px]"><T className="tracking-[-0.3px]">НАШИ РАБОТЫ</T></a><i className={bar} />
          <a className="pl-[14px]"><T className="tracking-[-0.45px]">КОНТАКТЫ</T></a>
        </nav>
      </div>
    </section>
  );
}

function Footer() {
  const line = "mt-9 h-28 border-l border-[#aeb2ba]";
  return (
    <footer className="h-[184px] bg-[#0a0e1b] bg-[repeating-linear-gradient(135deg,transparent_0_2px,#101523_2px_4px)] text-[#e4e4f0]">
      <div className="mx-auto flex w-[1184px]">
        <div className="w-[316px] pl-7">
          <div className="flex h-[118px] pl-[7px]">
            <LogoMark className="mt-9 h-[69px] w-[47px]" />
            <div className="ml-[10px] flex flex-col items-start">
              <T className="mt-[40px] ml-px font-['Inter'] text-[30.5px] leading-8 font-black tracking-[1.19px] text-[#e8e6f4]">AUTO</T>
              <T className="font-['Inter'] text-[30.5px] leading-8 font-black tracking-[0.55px] text-[#f7f7fd]">DOORS.KZ</T>
              <T className="-mt-px font-['Lato'] text-[13px] leading-5 tracking-[-0.07px] text-[#dfe2ec]">АВТОМАТИЧЕСКИЕ ДВЕРИ</T>
            </div>
          </div>
          <T className="mt-3 font-['Lato'] text-[11.5px] leading-5 font-bold text-white">AUTODOORS.KZ - Автоматические двери © 2016</T>
        </div>
        <div className={line + " flex w-[213px] font-['Noto_Sans']"}>
          <RingingPhoneIcon className="mt-[6.500px] ml-[14px] h-[12px] w-[12px] text-white" />
          <div className="-mt-px ml-auto flex flex-col items-end pr-6">
            <p className="flex items-baseline leading-6">
              <T className="mr-[5px] text-[14.5px] tracking-[0.72px]">+7 (727)</T>
              <T className="text-[18.5px] font-medium tracking-[-0.55px]">2-730-730</T>
            </p>
            <T className="mt-[3px] text-[14px] leading-6 tracking-[0.3px]">АЛМА-АТА</T>
            <p className="-mt-px -mr-px flex items-baseline leading-6">
              <T className="mr-[5px] text-[14.5px] tracking-[0.67px]">+7 (915)</T>
              <T className="text-[18.5px] font-medium tracking-[-0.59px]">2-000-000</T>
            </p>
            <T className="mt-px text-[14px] leading-6 tracking-[0.3px]">МОСКВА</T>
          </div>
        </div>
        <div className={line + " flex w-[308px] font-['Noto_Sans'] text-[14px]"}>
          <div className="ml-4 w-[35.500px]">
            <PinIcon className="mt-[4px] h-[15px] w-[9px] text-white" />
            <span className="mt-[32px] block text-[15px] leading-5">@</span>
          </div>
          <div className="-mt-[2px] flex flex-col items-start leading-[23px]">
            <T className="tracking-[-0.22px]">г. Алма-Ата, ул. Рабочая, дом 8а</T>
            <T className="tracking-[-0.28px]">г. Москва, ул. Рабочая, 8</T>
            <T className="mt-1 -ml-px tracking-[-0.08px]">siteg@domen.ru</T>
          </div>
        </div>
        <div className={line + " pl-[39px] font-['Noto_Sans']"}>
          <T className="-mt-px ml-[3px] text-[18px] font-medium leading-6 tracking-[-0.2px]">НАША ПРОДУКЦИЯ</T>
          <ul className="mt-[5px] text-[14px] leading-[26.5px]">
            <li className="flex"><span className="mr-1">•</span><T>АВТОМАТИЧЕСКИЕ ДВЕРИ</T></li>
            <li className="flex"><span className="mr-1">•</span><T className="tracking-[0.35px]">КАРУСЕЛЬНЫЕ ДВЕРИ</T></li>
            <li className="flex"><span className="mr-1">•</span><T>РАЗДВИЖНЫЕ СИСТЕМЫ</T></li>
          </ul>
        </div>
      </div>
    </footer>
  );
}

export default function App() {
  return (
    <div className="min-h-[1299px] w-full bg-white">
      <Header />
      <MainNav />
      <Content />
      <RegionMap />
      <FriendsBar />
      <Footer />
    </div>
  );
}
